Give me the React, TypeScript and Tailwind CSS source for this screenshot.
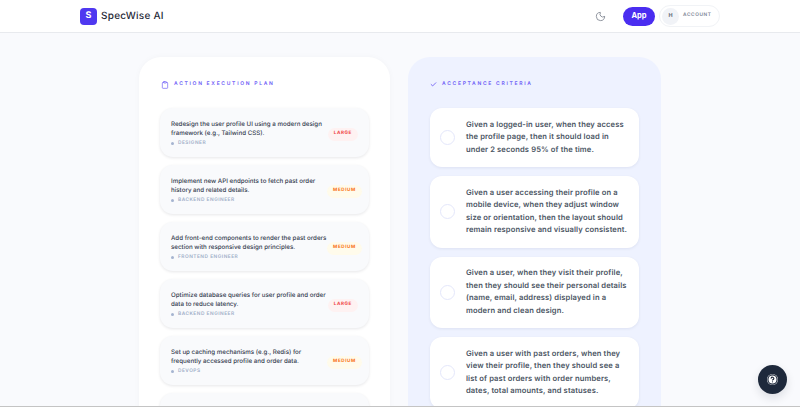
import { Check, Clipboard, CircleHelp, Moon } from "lucide-react";

const tasks = [
  { title: "Redesign the user profile UI using a modern design framework (e.g., Tailwind CSS).", role: "DESIGNER", size: "LARGE" },
  { title: "Implement new API endpoints to fetch past order history and related details.", role: "BACKEND ENGINEER", size: "MEDIUM" },
  { title: "Add front-end components to render the past orders section with responsive design principles.", role: "FRONTEND ENGINEER", size: "MEDIUM" },
  { title: "Optimize database queries for user profile and order data to reduce latency.", role: "BACKEND ENGINEER", size: "LARGE" },
  { title: "Set up caching mechanisms (e.g., Redis) for frequently accessed profile and order data.", role: "DEVOPS", size: "MEDIUM" },
];

const criteria = [
  "Given a logged-in user, when they access the profile page, then it should load in under 2 seconds 95% of the time.",
  "Given a user accessing their profile on a mobile device, when they adjust window size or orientation, then the layout should remain responsive and visually consistent.",
  "Given a user, when they visit their profile, then they should see their personal details (name, email, address) displayed in a modern and clean design.",
  "Given a user with past orders, when they view their profile, then they should see a list of past orders with order numbers, dates, total amounts, and statuses.",
];

function TaskCard({ title, role, size }: { title: string; role: string; size: string }) {
  return (
    <div className="flex h-[49px] shrink-0 items-center justify-between rounded-[13px] bg-[#f9fafc] px-[11px] pt-[3px] shadow-[0_1px_3px_rgba(15,23,42,0.1)]">
      <div className="w-[156px] shrink-0">
        <p className="text-[6.2px] font-medium leading-[8.6px] text-[#374151]">{title}</p>
        <div className="mt-[1px] flex items-center gap-[4px]">
          <span className="h-[3px] w-[3px] rounded-full bg-[#a5b4d0]" />
          <span className="text-[4.8px] font-semibold leading-[8px] tracking-[0.5px] text-[#a0aec8]">{role}</span>
        </div>
      </div>
      {size === "LARGE" ? (
        <span className="rounded-full bg-[#fef2f2] px-[6px] py-[3.5px] text-[4.6px] font-bold leading-[6px] tracking-[0.6px] text-[#ef4444]">LARGE</span>
      ) : (
        <span className="rounded-full bg-[#fffbeb] px-[6px] py-[3.5px] text-[4.6px] font-bold leading-[6px] tracking-[0.6px] text-[#f97316]">MEDIUM</span>
      )}
    </div>
  );
}

function CriterionCard({ text }: { text: string }) {
  return (
    <div className="flex shrink-0 items-center gap-[11px] rounded-[12px] bg-white py-[10.75px] pl-[10px] pr-[10px] shadow-[0_1px_3px_rgba(30,41,90,0.08)]">
      <span className="h-[15px] w-[15px] shrink-0 rounded-full border border-[#e4e7fb] bg-white" />
      <p className="text-[7.6px] font-semibold leading-[12.5px] tracking-[0.12px] text-[#4b5563]">{text}</p>
    </div>
  );
}

export default function App() {
  return (
    <div className="relative h-[407px] w-[800px] overflow-hidden bg-[#f9fafd] font-['Inter',sans-serif] [text-rendering:geometricPrecision]">
      <header className="flex h-[33px] items-center justify-between border-b border-[#e8eaee] bg-white px-[80px]">
        <div className="flex items-center gap-[4px]">
          <span className="flex h-[17px] w-[17px] items-center justify-center rounded-[4px] bg-[#4f38f0] text-[9px] font-bold text-white">S</span>
          <span className="text-[10px] font-medium tracking-[0.25px] text-[#1f2937]">SpecWise AI</span>
        </div>
        <div className="flex items-center">
          <Moon className="mr-[17px] h-[11px] w-[11px] text-[#6b7280]" strokeWidth={1.6} />
          <button className="flex h-[19px] w-[32px] items-center justify-center rounded-full bg-[#4a2df0] text-[7.5px] font-bold text-white">App</button>
          <div className="ml-[4px] flex h-[22px] w-[61px] items-center gap-[4px] rounded-full border border-[#f1f3f6] pl-[2px]">
            <span className="flex h-[17px] w-[17px] items-center justify-center rounded-full bg-[#f1f3f7] text-[5.5px] font-bold text-[#6b7280]">H</span>
            <span className="text-[4.8px] font-semibold tracking-[0.6px] text-[#7b8494]">ACCOUNT</span>
          </div>
        </div>
      </header>

      <main className="flex justify-center gap-[18px] pt-[24px]">
        <section className="h-[400px] w-[251px] rounded-t-[22px] bg-white px-[21px] pt-[22px] shadow-[0_0_6px_rgba(15,23,42,0.03)]">
          <div className="mb-[18px] flex h-[11px] items-center gap-[5px]">
            <Clipboard className="ml-[1px] h-[8px] w-[8px] text-[#6d5cf6]" strokeWidth={2} />
            <h2 className="text-[5px] font-semibold tracking-[1.7px] text-[#6d5cf6]">ACTION EXECUTION PLAN</h2>
          </div>
          <div className="flex flex-col gap-[8px]">
            {tasks.map((t) => (
              <TaskCard key={t.title} title={t.title} role={t.role} size={t.size} />
            ))}
            <div className="h-[49px] shrink-0 rounded-[13px] bg-[#f9fafc] shadow-[0_1px_3px_rgba(15,23,42,0.1)]" />
          </div>
        </section>

        <section className="h-[400px] w-[253px] rounded-t-[22px] bg-[#eef2ff] px-[22px] pt-[22px]">
          <div className="mb-[18px] flex h-[11px] items-center gap-[5px]">
            <Check className="h-[7px] w-[7px] text-[#4f38f0]" strokeWidth={2.4} />
            <h2 className="text-[5px] font-semibold tracking-[1.7px] text-[#6d5cf6]">ACCEPTANCE CRITERIA</h2>
          </div>
          <div className="flex flex-col gap-[9px]">
            {criteria.map((c) => (
              <CriterionCard key={c} text={c} />
            ))}
          </div>
        </section>
      </main>

      <button className="absolute left-[758px] top-[365px] flex h-[29px] w-[29px] items-center justify-center rounded-full bg-[#1e293b] shadow-[0_4px_10px_rgba(15,23,42,0.12)]">
        <span className="flex h-[11px] w-[11px] items-center justify-center rounded-full bg-white">
          <CircleHelp className="h-[11px] w-[11px] text-[#1e293b]" strokeWidth={2.6} />
        </span>
      </button>
      <div className="absolute inset-x-0 bottom-0 h-[1px] bg-[#c4c4c4]" />
    </div>
  );
}
